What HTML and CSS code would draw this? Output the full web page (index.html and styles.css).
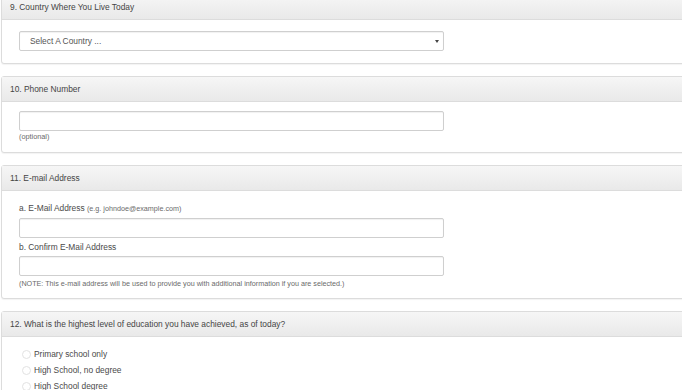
FILE: index.html
```html
<!DOCTYPE html>
<html lang="en">
<head>
    <meta charset="UTF-8" />
    <meta name="viewport" content="width=device-width, initial-scale=1.0"/>
    <title>Application Form</title>
    <link rel="stylesheet" href="styles.css">
</head>
<body>

    <div class="form">
        <!-- Question 9 -->
        <section class="panel">
            <div class="panel-heading">9. Country Where You Live Today</div>
            <div class="panel-body body-country">
                <div class="select-wrap">
                    <select class="form-control">
                        <option>Select A Country ...</option>
                    </select>
                </div>
            </div>
        </section>

        <!-- Question 10 -->
        <section class="panel">
            <div class="panel-heading">10. Phone Number</div>
            <div class="panel-body body-phone">
                <input type="text" class="form-control">
                <div class="help">(optional)</div>
            </div>
        </section>

        <!-- Question 11 -->
        <section class="panel">
            <div class="panel-heading">11. E-mail Address</div>
            <div class="panel-body body-email">
                <label class="field-label">a. E-Mail Address <small>(e.g. johndoe@example.com)</small></label>
                <input type="text" class="form-control">
                <label class="field-label">b. Confirm E-Mail Address</label>
                <input type="text" class="form-control">
                <div class="help note">(NOTE: This e-mail address will be used to provide you with additional information if you are selected.)</div>
            </div>
        </section>

        <!-- Question 12 -->
        <section class="panel">
            <div class="panel-heading">12. What is the highest level of education you have achieved, as of today?</div>
            <div class="panel-body body-radios">
                <label class="radio"><input type="radio" name="edu"><span>Primary school only</span></label>
                <label class="radio"><input type="radio" name="edu"><span>High School, no degree</span></label>
                <label class="radio"><input type="radio" name="edu"><span>High School degree</span></label>
            </div>
        </section>
    </div>

</body>
</html>
```

FILE: styles.css
```css
/* Colours used across the form */
:root {
    --border: #dcdcdc;
    --input-border: #cfcfcf;
    --text: #4a4a4a;
    --muted: #6a6a6a;
}

* {
    box-sizing: border-box;
}

body {
    margin: 0;
    background: #fff;
    font-family: 'Liberation Sans', Arial, sans-serif;
    font-size: 8.4px;
    color: var(--text);
    overflow: hidden;
}

/* Panels run past the right edge of the window */
.form {
    width: 720px;
    margin-top: -6px;
    padding-left: 1px;
}

.panel {
    border: 1px solid var(--border);
    border-radius: 3px;
    background: #fff;
    box-shadow: 0 1px 1px rgba(0, 0, 0, 0.05);
    margin-bottom: 12px;
}

.panel-heading {
    height: 25px;
    line-height: 24px;
    padding: 0 8px;
    border-bottom: 1px solid var(--border);
    background: linear-gradient(to bottom, #f6f6f6, #e9e9e9);
    color: #444;
    font-size: 8.4px;
}

.panel-body {
    padding: 10px 17px;
}

.body-country {
    padding-top: 11px;
    padding-bottom: 12px;
}

.body-phone {
    padding-top: 9px;
    padding-bottom: 10px;
}

.body-email {
    padding-top: 11px;
    padding-bottom: 9px;
}

.body-radios {
    padding-top: 9px;
    padding-left: 20px;
}

/* Inputs */
.form-control {
    display: block;
    width: 425px;
    height: 20px;
    margin: 0;
    padding: 0 10px;
    border: 1px solid var(--input-border);
    border-radius: 2px;
    background: #fff;
    box-shadow: inset 0 1px 1px rgba(0, 0, 0, 0.06);
    font-family: inherit;
    font-size: 8.4px;
    color: #555;
    outline: none;
}

.select-wrap {
    position: relative;
    width: 425px;
}

.select-wrap select {
    appearance: none;
    -webkit-appearance: none;
}

/* Small dropdown arrow on the right of the select */
.select-wrap::after {
    content: '';
    position: absolute;
    right: 5px;
    top: 9px;
    border-left: 2px solid transparent;
    border-right: 2px solid transparent;
    border-top: 3px solid #444;
}

.field-label {
    display: block;
    line-height: 12px;
    margin-bottom: 3px;
}

.field-label small {
    font-size: 7.2px;
    color: var(--muted);
}

.form-control + .field-label {
    margin-top: 3px;
}

.help {
    line-height: 11px;
    font-size: 7.3px;
    color: var(--muted);
}

.note {
    margin-top: 3px;
    line-height: 10px;
    font-size: 7.2px;
}

/* Radio list */
.radio {
    display: flex;
    align-items: center;
    height: 16px;
    gap: 3px;
}

.radio input {
    appearance: none;
    -webkit-appearance: none;
    width: 9px;
    height: 9px;
    margin: 0;
    border: 1px solid #e2e2e2;
    border-radius: 50%;
    background: #fff;
}
```
